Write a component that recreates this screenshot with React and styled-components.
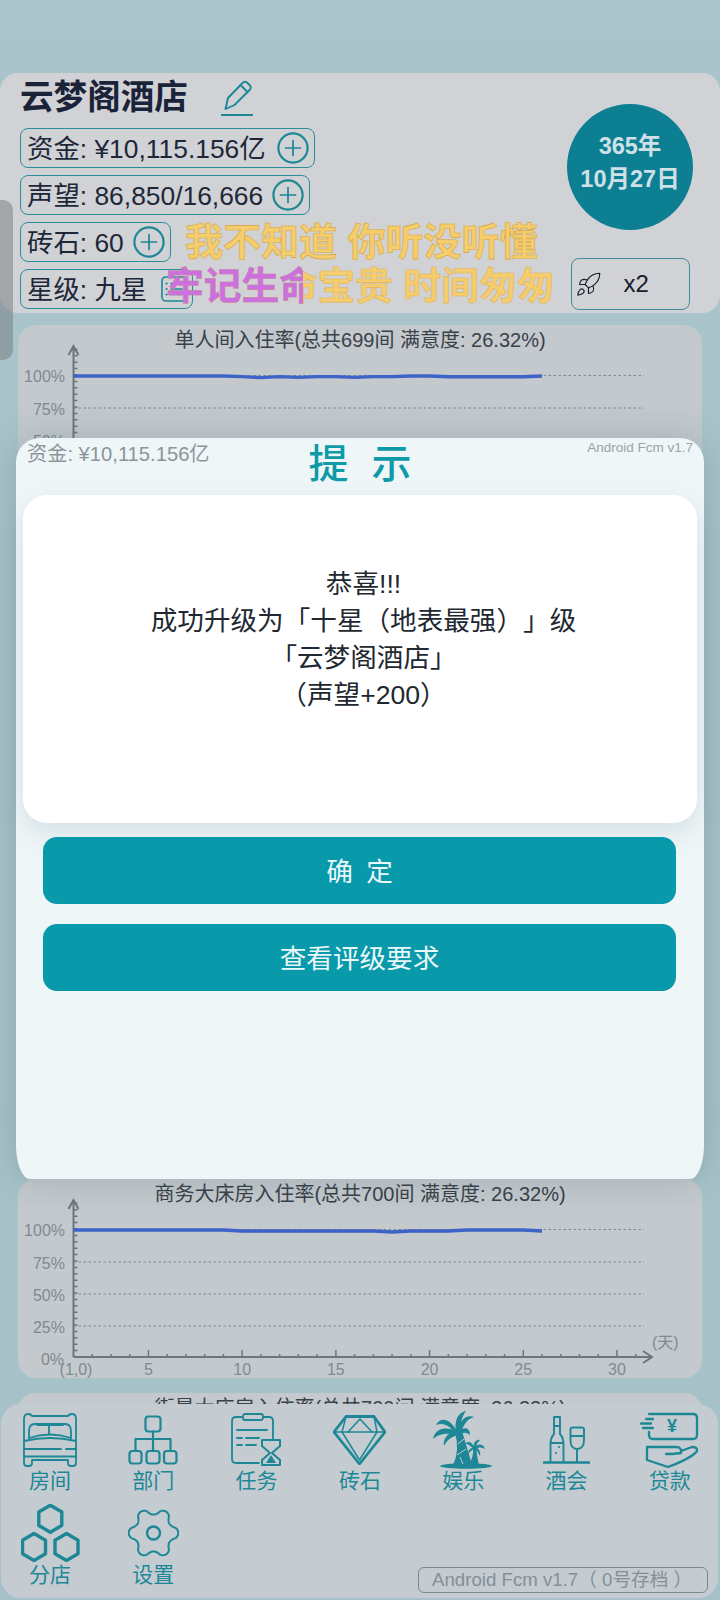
import React from "react";
import styled, { createGlobalStyle } from "styled-components";
import { Rocket } from "lucide-react";

const SANS = `"Liberation Sans", "Noto Sans CJK SC", sans-serif`;
const TEAL = "#1d8796";

const Global = createGlobalStyle`
  html, body { margin: 0; padding: 0; background: #a9c4ca; }
  * { box-sizing: border-box; }
`;

const Page = styled.div`
  position: relative;
  width: 720px;
  height: 1600px;
  overflow: hidden;
  padding-top: 73px;
  font-family: ${SANS};
  text-spacing-trim: space-all;
  background: linear-gradient(180deg, #a9c4ca 0%, #a6c1c7 100%);
`;

const HeaderPanel = styled.header`
  display: flex;
  height: 240px;
  padding: 2px 27px 0 20px;
  border-radius: 18px;
  background: #d0d2d6;
`;

const HeaderLeft = styled.div`
  display: flex;
  flex-direction: column;
  align-items: flex-start;
  gap: 7px;
`;

const TitleRow = styled.div`
  display: flex;
  align-items: center;
  height: 46px;
  gap: 33px;
`;

const HotelName = styled.h1`
  margin: 0;
  font-size: 33.6px;
  line-height: 46px;
  font-weight: 700;
  color: #1a2338;
`;

const Pill = styled.div`
  display: inline-flex;
  align-items: center;
  height: 40px;
  padding: 0 5px 0 6px;
  gap: ${(p) => p.$gap}px;
  border: 1.5px solid #2c8d9b;
  border-radius: 8px;
  font-size: 26.4px;
  color: #1e2738;
  white-space: nowrap;
`;

const PillText = styled.span`
  margin-top: -4px;
`;

const HeaderRight = styled.div`
  display: flex;
  flex-direction: column;
  align-items: center;
  margin-left: auto;
  padding-top: 29px;
`;

const DateCircle = styled.div`
  display: flex;
  flex-direction: column;
  align-items: center;
  justify-content: center;
  width: 126px;
  height: 126px;
  padding-bottom: 8px;
  border-radius: 50%;
  background: #0c7f93;
  color: #cfe0e7;
  font-size: 23.5px;
  line-height: 33px;
  font-weight: 700;
`;

const SpeedBox = styled.div`
  display: flex;
  align-items: center;
  width: 119px;
  height: 52px;
  margin-top: 28px;
  padding-left: 3px;
  border: 1.5px solid #3f8a97;
  border-radius: 8px;
  font-size: 24px;
  color: #16202c;
`;

const SpeedValue = styled.span`
  margin-left: 22px;
`;

const Handle = styled.div`
  position: absolute;
  left: 0;
  top: 200px;
  width: 13px;
  height: 160px;
  border-radius: 0 10px 10px 0;
  background: rgba(120, 130, 133, 0.55);
`;

const Danmaku = styled.div`
  position: absolute;
  left: ${(p) => p.$left}px;
  top: ${(p) => p.$top}px;
  font-size: ${(p) => p.$size}px;
  line-height: 46px;
  font-weight: 700;
  white-space: nowrap;
  color: transparent;
  background: ${(p) => p.$paint};
  -webkit-background-clip: text;
  background-clip: text;
  -webkit-text-stroke: 0.6px ${(p) => p.$stroke};
`;

const Charts = styled.main`
  display: flex;
  flex-direction: column;
  gap: 14.5px;
  margin: 12px 18px 0;
`;

const ChartCard = styled.section`
  display: grid;
  height: 199px;
  flex: none;
  border-radius: 18px;
  background: #c3c9cd;
  overflow: hidden;
`;

const ChartTitle = styled.div`
  grid-area: 1 / 1;
  justify-self: center;
  align-self: start;
  padding-top: 1px;
  font-size: 20px;
  line-height: 28px;
  color: #3a4148;
  white-space: nowrap;
`;

const ChartSvg = styled.svg`
  grid-area: 1 / 1;
  display: block;
  width: 684px;
  height: 199px;
`;

const AxisLabel = styled.text`
  font-family: ${SANS};
  font-size: 16px;
  fill: #808a91;
`;

const HiddenCards = styled.div`
  flex: none;
  height: 626px;
`;

const Modal = styled.section`
  position: absolute;
  left: 16px;
  top: 438px;
  display: flex;
  flex-direction: column;
  width: 688px;
  height: 741px;
  border-radius: 24px 24px 14px 14px / 24px 24px 34px 34px;
  background: #eff6f8;
  box-shadow: 0 0 34px rgba(40, 80, 90, 0.22);
`;

const ModalTop = styled.div`
  display: grid;
  grid-template-columns: 1fr auto 1fr;
  height: 57px;
`;

const ModalFunds = styled.div`
  padding: 2px 0 0 11px;
  font-size: 20.2px;
  line-height: 28px;
  color: #8d9499;
`;

const ModalHeading = styled.h2`
  margin: -1px 0 0;
  font-size: 40px;
  line-height: 54px;
  font-weight: 500;
  word-spacing: 12px;
  color: #0f9aa8;
`;

const ModalVersion = styled.div`
  padding: 0 11px 0 0;
  font-size: 13.5px;
  line-height: 20px;
  text-align: right;
  color: #9aa3a8;
`;

const MessageBox = styled.div`
  display: flex;
  flex-direction: column;
  align-items: center;
  justify-content: center;
  height: 328px;
  margin: 0 7px;
  padding: 0 0 38px 7px;
  border-radius: 24px;
  background: #fff;
  box-shadow: 0 10px 26px rgba(60, 100, 110, 0.14);
  font-size: 26.6px;
  line-height: 36.8px;
  color: #222831;
`;

const Actions = styled.div`
  display: flex;
  flex-direction: column;
  gap: 20px;
  margin: 14px 28px 0 27px;
`;

const ActionButton = styled.button`
  height: 67px;
  padding: 0 0 3px;
  border: 0;
  border-radius: 14px;
  background: #0899ab;
  color: #eaf7f8;
  font-family: ${SANS};
  font-size: 26.6px;
  word-spacing: 6px;
`;

const BottomNav = styled.nav`
  position: absolute;
  left: 1px;
  top: 1404px;
  width: 717px;
  height: 194px;
  padding-top: 9px;
  border-radius: 20px;
  background: #c4ccd1;
`;

const NavRow = styled.div`
  display: flex;
  gap: 5.3px;
  height: ${(p) => p.$h}px;
`;

const NavItem = styled.div`
  display: flex;
  flex-direction: column;
  align-items: center;
  justify-content: flex-start;
  width: 98px;
  flex: none;
  color: ${TEAL};
  font-size: 21px;
  line-height: 28px;
`;

const IconSlot = styled.div`
  display: flex;
  align-items: center;
  justify-content: center;
  height: ${(p) => p.$h}px;
`;

const SaveBadge = styled.div`
  align-self: flex-end;
  margin: 0 10px 5px auto;
  width: 290px;
  height: 26px;
  padding-left: 13px;
  border: 1.5px solid #7d868d;
  border-radius: 6px;
  font-size: 18.67px;
  line-height: 23px;
  color: #858f96;
  white-space: nowrap;
`;

const Stroke = styled.svg`
  display: block;
  fill: none;
  stroke: ${TEAL};
  stroke-width: ${(p) => p.$w || 2};
  stroke-linecap: round;
  stroke-linejoin: round;
  flex: none;
`;

function PlusIcon() {
  return (
    <Stroke width="32" height="32" viewBox="0 0 32 32" $w={2.2}>
      <circle cx="16" cy="16" r="14.6" />
      <path d="M16 8.5V23.5M8.5 16H23.5" strokeWidth="1.7" />
    </Stroke>
  );
}

function ListIcon() {
  return (
    <Stroke width="26" height="26" viewBox="0 0 26 26" $w={1.6}>
      <rect x="1" y="1" width="24" height="24" rx="4" />
      <path d="M5.5 7.5h.1M5.5 13h.1M5.5 18.5h.1" strokeWidth="2.2" />
      <path d="M10 7.5h11M10 13h11M10 18.5h11" />
    </Stroke>
  );
}

function PencilIcon() {
  return (
    <Stroke width="32" height="36" viewBox="0 0 32 36" $w={1.9}>
      <path d="M4.5 29 L7 18 L22 2.5 Q24 1 26 2.5 L29 5.5 Q30.5 7.5 29 9.5 L13.5 25 Z" />
      <path d="M19.5 5 L26.5 12" />
      <path d="M0.5 35 H31.5" />
    </Stroke>
  );
}

const BedIcon = () => (
  <Stroke width="54" height="54" viewBox="0 0 54 54" $w={1.8}>
    <path d="M1 6Q1 1 5 1Q8 1 9 3H45Q46 1 49 1Q53 1 53 6V50Q53 53 50 53H48Q45 53 45 50V47H9V50Q9 53 6 53H4Q1 53 1 50Z" />
    <path d="M6 25V18Q6 11 12 11H42Q48 11 48 18V25" />
    <path d="M6 25Q27 18 48 25M14 12H40M26 12V22" />
    <path d="M1 28Q27 22 53 28M1 36H38M43 36H53M1 43.5H53" />
  </Stroke>
);

const OrgIcon = () => (
  <Stroke width="50" height="50" viewBox="0 0 50 50" $w={2.2}>
    <rect x="17.5" y="1.5" width="15" height="15" rx="3" />
    <rect x="1.5" y="36" width="12" height="12.5" rx="3" />
    <rect x="18.5" y="36" width="13" height="12.5" rx="3" />
    <rect x="36" y="36" width="12.5" height="12.5" rx="3" />
    <path d="M25 16.5V36M7.5 36V24H42.5V36" />
  </Stroke>
);

const TaskIcon = () => (
  <Stroke width="52" height="54" viewBox="0 0 52 54" $w={1.8}>
    <path d="M11 4H5Q1 4 1 8V46Q1 50 5 50H28M32 4H38Q42 4 42 8V26" />
    <rect x="12" y="1" width="20" height="6" rx="2" />
    <path d="M6 17H36M6 25H11M15 25H28M6 32H11M15 32H25" />
    <path d="M31 27H49V33L41 40L49 47V52H31V47L39 40L31 33Z" strokeWidth="2" />
    <path d="M40 42L45 50H35Z" fill={TEAL} stroke="none" />
  </Stroke>
);

const DiamondIcon = () => (
  <Stroke width="53" height="50" viewBox="0 0 53 50" $w={2.8}>
    <path d="M13 1.5H41L52 17L26.5 49L1 17Z" />
    <path d="M1 17H52" strokeWidth="1.6" />
    <path d="M27 4L15 17M27 4L39 17M13 1.5L9 17L26.5 45L44 17L41 1.5" strokeWidth="1.5" />
  </Stroke>
);

const PalmIcon = () => (
  <svg width="60" height="58" viewBox="0 0 60 58" fill={TEAL} style={{ display: "block" }}>
    <ellipse cx="33" cy="55" rx="26" ry="2.8" />
    <path d="M20 54Q27 40 22 21L29 20Q35 40 39 54Z" />
    <path d="M24 21C26 9 34 3 41 6C34 8 31 13 28 22Z" />
    <path d="M23 21C21 10 25 1 33 0C29 5 27 12 27 21Z" />
    <path d="M25 22C17 6 7 6 3 14C10 11 17 14 22 23Z" />
    <path d="M24 21C12 14 2 18 0 28C7 22 15 22 23 24Z" />
    <path d="M24 21C14 21 10 28 11 35C14 29 18 26 25 24Z" />
    <path d="M26 20C32 15 37 17 37 24C33 21 30 21 26 24Z" />
    <path d="M36 54Q41 45 40 36L43 36Q44 46 46 54Z" />
    <path d="M41 37C40 32 43 28 47 29C45 31 43 33 43 37Z" />
    <path d="M42 37C38 30 35 30 32 33C36 33 38 35 40 38Z" />
    <path d="M42 36C45 32 51 33 52 38C49 36 46 36 42 38Z" />
    <path d="M42 37C38 36 35 39 35 43C38 40 39 39 41 38Z" />
    <path d="M42 36C46 37 48 41 47 45C45 41 44 40 42 38Z" />
    <path d="M25 33L31 28M24 44L33 38M30 53L27 46" stroke="#c4ccd1" strokeWidth="1" fill="none" />
  </svg>
);

const DrinksIcon = () => (
  <Stroke width="47" height="48" viewBox="0 0 47 48" $w={1.9}>
    <path d="M11 1H17V18Q20.5 22 20.5 28V46M11 1V18Q7.5 22 7.5 28V46M11 10H17M7.5 27H20.5" />
    <path d="M16 31h.1M13 37h.1" strokeWidth="2" />
    <path d="M27.5 13Q27.5 11.5 30 11.5H38Q41 11.5 41 13V24Q41 33 34 33Q27.5 33 27.5 24ZM27.5 20H41M34 33V46" />
    <path d="M0.5 46.5H46.5" strokeWidth="2.4" />
  </Stroke>
);

const CoinLabel = styled.text`
  font-family: ${SANS};
  font-size: 18px;
  font-weight: 700;
  fill: ${TEAL};
  stroke: none;
  text-anchor: middle;
`;

const LoanIcon = () => (
  <Stroke width="60" height="58" viewBox="0 0 60 58" $w={2.3}>
    <path d="M9 3H53Q57 3 57 7V24Q57 28 53 28H13Q9 28 9 24V21" />
    <path d="M6 8H13M1 12.5H11M3 17H13" />
    <CoinLabel x="32" y="21">¥</CoinLabel>
    <path d="M7 36H36Q42 36 41 42L32 43H26" />
    <path d="M41 40L52 36Q58 36 57 40Q52 47 28 56L7 49V36" />
  </Stroke>
);

const hexPoints = (cx, cy, rx = 11.5, ry = 13.5) =>
  [
    [cx, cy - ry],
    [cx + rx, cy - ry / 2],
    [cx + rx, cy + ry / 2],
    [cx, cy + ry],
    [cx - rx, cy + ry / 2],
    [cx - rx, cy - ry / 2],
  ]
    .map((p) => p.join(","))
    .join(" ");

const BranchIcon = () => (
  <Stroke width="59" height="58" viewBox="0 0 59 58" $w={3.4}>
    <polygon points={hexPoints(29.3, 14.7)} />
    <polygon points={hexPoints(13, 43)} />
    <polygon points={hexPoints(45.5, 43)} />
  </Stroke>
);

const gearPath = (() => {
  const pts = [];
  for (let i = 0; i < 180; i++) {
    const a = (i / 180) * Math.PI * 2;
    const c = Math.cos(6 * a);
    const r = 21.6 + 3.2 * Math.sign(c) * Math.pow(Math.abs(c), 0.7);
    pts.push(`${(25.5 + r * Math.cos(a)).toFixed(2)} ${(25 + r * Math.sin(a)).toFixed(2)}`);
  }
  return "M" + pts.join("L") + "Z";
})();

const GearIcon = () => (
  <Stroke width="51" height="50" viewBox="0 0 51 50" $w={2}>
    <path d={gearPath} />
    <circle cx="25.5" cy="25" r="6.5" strokeWidth="2.4" />
  </Stroke>
);

const DAY = 18.74;
const AXIS_X = 55.5;
const AXIS_Y = 178;
const LEVELS = [
  ["100%", 50.5],
  ["75%", 83],
  ["50%", 115],
  ["25%", 147],
];

function OccupancyPlot({ offsets }) {
  const line = Array.from({ length: 26 }, (_, i) => `${AXIS_X + i * DAY},${51 + (offsets[i + 1] || 0)}`).join(" ");
  const xTicks = Array.from({ length: 31 }, (_, i) => i);
  const yTicks = Array.from({ length: 24 }, (_, i) => i + 1);
  return (
    <ChartSvg viewBox="0 0 684 199">
      {LEVELS.map(([label, y]) => (
        <g key={label}>
          <line x1={AXIS_X} x2="626" y1={y} y2={y} stroke="#7c8a90" strokeWidth="1.2" strokeDasharray="2.5 2.5" />
          <AxisLabel x="47" y={y + 6.5} textAnchor="end">{label}</AxisLabel>
        </g>
      ))}
      <AxisLabel x="46" y="186" textAnchor="end">0%</AxisLabel>
      {yTicks.map((i) => (
        <line key={i} x1={AXIS_X} x2={AXIS_X + 4} y1={AXIS_Y - i * 6.4} y2={AXIS_Y - i * 6.4} stroke="#6d767e" strokeWidth="1.5" />
      ))}
      {xTicks.map((i) => (
        <line key={i} x1={AXIS_X + i * DAY} x2={AXIS_X + i * DAY} y1={AXIS_Y} y2={(i + 1) % 5 === 0 ? AXIS_Y - 7 : AXIS_Y - 3} stroke="#6d767e" strokeWidth="1.5" />
      ))}
      <path d={`M${AXIS_X} ${AXIS_Y}V21M${AXIS_X - 5} 30L${AXIS_X} 21L${AXIS_X + 5} 30M${AXIS_X} ${AXIS_Y}H634M625 172L634 ${AXIS_Y}L625 184`} fill="none" stroke="#6d767e" strokeWidth="2" />
      <AxisLabel x="58" y="196" textAnchor="middle">(1,0)</AxisLabel>
      {[5, 10, 15, 20, 25, 30].map((d) => (
        <AxisLabel key={d} x={AXIS_X + (d - 1) * DAY} y="196" textAnchor="middle">{d}</AxisLabel>
      ))}
      <AxisLabel x="634" y="169">(天)</AxisLabel>
      <polyline points={line} fill="none" stroke="#3d62c8" strokeWidth="3.4" strokeLinejoin="bevel" />
    </ChartSvg>
  );
}

function OccupancyChart({ title, offsets }) {
  return (
    <ChartCard>
      {offsets && <OccupancyPlot offsets={offsets} />}
      <ChartTitle>{title}</ChartTitle>
    </ChartCard>
  );
}

const NAV_TOP = [
  ["房间", <BedIcon key="a" />],
  ["部门", <OrgIcon key="a" />],
  ["任务", <TaskIcon key="a" />],
  ["砖石", <DiamondIcon key="a" />],
  ["娱乐", <PalmIcon key="a" />],
  ["酒会", <DrinksIcon key="a" />],
  ["贷款", <LoanIcon key="a" />],
];

const NAV_BOTTOM = [
  ["分店", <BranchIcon key="a" />],
  ["设置", <GearIcon key="a" />],
];

const navItem = (slot) => ([label, icon]) => (
  <NavItem key={label}>
    <IconSlot $h={slot}>{icon}</IconSlot>
    {label}
  </NavItem>
);

export default function App() {
  return (
    <Page>
      <Global />
      <HeaderPanel>
        <HeaderLeft>
          <TitleRow>
            <HotelName>云梦阁酒店</HotelName>
            <PencilIcon />
          </TitleRow>
          <Pill $gap={11}><PillText>资金: ¥10,115.156亿</PillText><PlusIcon /></Pill>
          <Pill $gap={9}><PillText>声望: 86,850/16,666</PillText><PlusIcon /></Pill>
          <Pill $gap={9}><PillText>砖石: 60</PillText><PlusIcon /></Pill>
          <Pill $gap={14}><PillText>星级: 九星</PillText><ListIcon /></Pill>
        </HeaderLeft>
        <HeaderRight>
          <DateCircle>
            <span>365年</span>
            <span>10月27日</span>
          </DateCircle>
          <SpeedBox>
            <Rocket size={27} strokeWidth={1} />
            <SpeedValue>x2</SpeedValue>
          </SpeedBox>
        </HeaderRight>
      </HeaderPanel>
      <Handle />
      <Charts>
        <OccupancyChart
          title="单人间入住率(总共699间 满意度: 26.32%)"
          offsets={{ 10: 0.6, 11: 1.6, 12: 0.6, 13: 1.4, 14: 0.6, 15: 0.6, 16: 1.4, 17: 0.6, 18: 0.6, 21: 0.8, 22: 0.8, 23: 0.8, 24: 0.8, 25: 0.8 }}
        />
        <HiddenCards />
        <OccupancyChart
          title="商务大床房入住率(总共700间 满意度: 26.32%)"
          offsets={{ 10: 1, 11: 1, 12: 1, 13: 1, 14: 1, 15: 1, 16: 1, 17: 1, 18: 2, 19: 1, 20: 1, 21: 1, 26: 1 }}
        />
        <OccupancyChart title="街景大床房入住率(总共700间 满意度: 26.32%)" />
      </Charts>
      <Danmaku $left={185} $top={219} $size={38} $stroke="#d2a84c" $paint="#f5cd6c">我不知道 你听没听懂</Danmaku>
      <Danmaku
        $left={166}
        $top={263}
        $size={37.8}
        $stroke="rgba(200,150,90,0.5)"
        $paint="linear-gradient(90deg, #cb70de 0, #cb70de 137px, #f5cd6c 137px)"
      >
        牢记生命宝贵 时间匆匆
      </Danmaku>
      <Modal>
        <ModalTop>
          <ModalFunds>资金: ¥10,115.156亿</ModalFunds>
          <ModalHeading>提 示</ModalHeading>
          <ModalVersion>Android Fcm v1.7</ModalVersion>
        </ModalTop>
        <MessageBox>
          <span>恭喜!!!</span>
          <span>成功升级为「十星（地表最强）」级</span>
          <span>「云梦阁酒店」</span>
          <span>（声望+200）</span>
        </MessageBox>
        <Actions>
          <ActionButton>确 定</ActionButton>
          <ActionButton>查看评级要求</ActionButton>
        </Actions>
      </Modal>
      <BottomNav>
        <NavRow $h={92}>{NAV_TOP.map(navItem(54))}</NavRow>
        <NavRow $h={93}>
          {NAV_BOTTOM.map(navItem(56))}
          <SaveBadge>Android Fcm v1.7（ 0号存档 ）</SaveBadge>
        </NavRow>
      </BottomNav>
    </Page>
  );
}
